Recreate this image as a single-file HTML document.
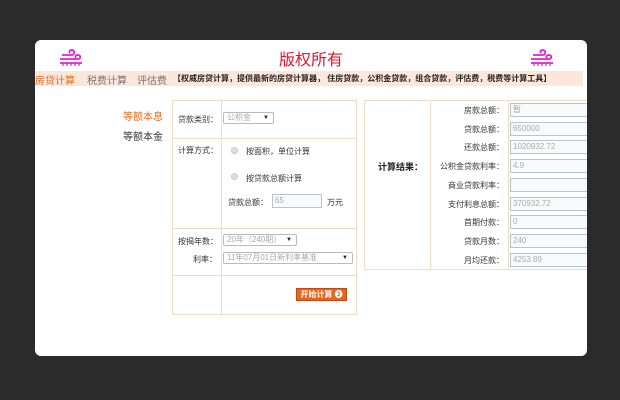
<!DOCTYPE html>
<html><head><meta charset="utf-8"><style>
*{margin:0;padding:0;box-sizing:border-box}
body{width:620px;height:400px;background:#2b2b2b;font-family:"Liberation Sans","Noto Sans CJK SC",sans-serif;font-size:9px;color:#333;position:relative;overflow:hidden}
.card{position:absolute;left:35px;top:40px;width:552px;height:316px;background:#fff;border-radius:6px;overflow:hidden}
.a{position:absolute;white-space:nowrap}
.title{left:0;width:552px;top:6px;text-align:center;font-size:16px;color:#e8132a}
.tabs{left:0;top:31px;width:548px;height:15px;background:#fde6da}
.box{position:absolute;border:1px solid #f5dcc8}
.inp{position:absolute;border:1px solid #b8c4d0;background:#f8fafc;color:#aaa;font-size:8px;padding-left:2px;line-height:12px;height:14px}
.sel{position:absolute;border:1px solid #bbb;background:#fff;color:#aaa;font-size:8px;padding-left:3px;line-height:10px;height:12px;border-radius:2px}
.sel b{position:absolute;right:4px;top:0;color:#222;font-size:6px}
.lbl{position:absolute;text-align:right;font-size:8px;color:#333;white-space:nowrap}
.rad{position:absolute;width:7px;height:7px;border-radius:50%;background:#ddd;border:1px solid #ccc}
</style></head><body>
<div class="card">
<svg class="a" style="left:23px;top:8px" width="26" height="20" viewBox="0 0 26 20" fill="none" stroke="#e020d0" stroke-width="1.8"><path d="M4 7h10c3 0 3-5 0-5s-3 2-2 3"/><path d="M2 11h18c3 0 3-4 0-4s-3 2-2 3"/><path d="M2 15h22"/><path d="M5 15v3M9 15v3M13 15v3M17 15v3M21 15v3" stroke-width="1.2"/></svg>
<svg class="a" style="left:494px;top:8px" width="26" height="20" viewBox="0 0 26 20" fill="none" stroke="#e020d0" stroke-width="1.8"><path d="M4 7h10c3 0 3-5 0-5s-3 2-2 3"/><path d="M2 11h18c3 0 3-4 0-4s-3 2-2 3"/><path d="M2 15h22"/><path d="M5 15v3M9 15v3M13 15v3M17 15v3M21 15v3" stroke-width="1.2"/></svg>
<div class="a title">版权所有</div>
<div class="a tabs"></div>
<div class="a" style="left:0;top:32px;font-size:10px;color:#e8691a">房贷计算</div>
<div class="a" style="left:52px;top:32px;font-size:10px;color:#777">税费计算</div>
<div class="a" style="left:102px;top:32px;font-size:10px;color:#777">评估费</div>
<div class="a" style="left:138px;top:33px;font-size:8px;font-weight:bold;color:#222">【权威房贷计算，提供最新的房贷计算器， 住房贷款，公积金贷款，组合贷款，评估费，税费等计算工具】</div>
<div class="a" style="left:88px;top:68px;font-size:10px;color:#e8691a">等额本息</div>
<div class="a" style="left:88px;top:88px;font-size:10px;color:#333">等额本金</div>
<div class="box" style="left:137px;top:60px;width:185px;height:215px"></div>
<div class="a" style="left:186px;top:60px;width:1px;height:215px;background:#f5dcc8"></div>
<div class="a" style="left:137px;top:98px;width:185px;height:1px;background:#f5dcc8"></div>
<div class="a" style="left:137px;top:188px;width:185px;height:1px;background:#f5dcc8"></div>
<div class="a" style="left:137px;top:235px;width:185px;height:1px;background:#f5dcc8"></div>
<div class="lbl" style="left:143px;top:74px">贷款类别：</div>
<div class="sel" style="left:188px;top:72px;width:51px">公积金<b>▼</b></div>
<div class="lbl" style="left:143px;top:105px">计算方式：</div>
<div class="rad" style="left:196px;top:107px"></div><div class="lbl" style="left:211px;top:106px">按面积，单位计算</div>
<div class="rad" style="left:196px;top:133px"></div><div class="lbl" style="left:211px;top:133px">按贷款总额计算</div>
<div class="lbl" style="left:193px;top:157px">贷款总额：</div>
<div class="inp" style="left:237px;top:154px;width:50px">65</div>
<div class="lbl" style="left:292px;top:157px">万元</div>
<div class="lbl" style="left:143px;top:196px">按揭年数：</div>
<div class="sel" style="left:188px;top:194px;width:74px">20年（240期）<b>▼</b></div>
<div class="lbl" style="left:158px;top:214px">利率：</div>
<div class="sel" style="left:188px;top:212px;width:130px">11年07月01日新利率基准<b>▼</b></div>
<div class="a" style="left:261px;top:248px;width:51px;height:13px;background:#e8631e;border:1px solid #c04a10;color:#fff;font-weight:bold;font-size:8px;line-height:11px;text-align:center">开始计算 ❷</div>
<div class="box" style="left:329px;top:60px;width:240px;height:170px"></div>
<div class="a" style="left:395px;top:60px;width:1px;height:170px;background:#f5dcc8"></div>
<div class="a" style="left:473px;top:60px;width:1px;height:170px;background:#f5dcc8"></div>
<div class="a" style="left:343px;top:120px;font-size:9px;font-weight:bold;color:#222">计算结果：</div>
<div class="lbl" style="left:396px;width:73px;top:65px">房款总额：</div><div class="inp" style="left:475px;top:63px;width:90px">暂</div>
<div class="lbl" style="left:396px;width:73px;top:84px">贷款总额：</div><div class="inp" style="left:475px;top:82px;width:90px">650000</div>
<div class="lbl" style="left:396px;width:73px;top:102px">还款总额：</div><div class="inp" style="left:475px;top:100px;width:90px">1020932.72</div>
<div class="lbl" style="left:396px;width:73px;top:121px">公积金贷款利率：</div><div class="inp" style="left:475px;top:119px;width:90px">4.9</div>
<div class="lbl" style="left:396px;width:73px;top:140px">商业贷款利率：</div><div class="inp" style="left:475px;top:138px;width:90px"></div>
<div class="lbl" style="left:396px;width:73px;top:159px">支付利息总额：</div><div class="inp" style="left:475px;top:157px;width:90px">370932.72</div>
<div class="lbl" style="left:396px;width:73px;top:177px">首期付款：</div><div class="inp" style="left:475px;top:175px;width:90px">0</div>
<div class="lbl" style="left:396px;width:73px;top:196px">贷款月数：</div><div class="inp" style="left:475px;top:194px;width:90px">240</div>
<div class="lbl" style="left:396px;width:73px;top:215px">月均还款：</div><div class="inp" style="left:475px;top:213px;width:90px">4253.89</div>
</div>
</body></html>
